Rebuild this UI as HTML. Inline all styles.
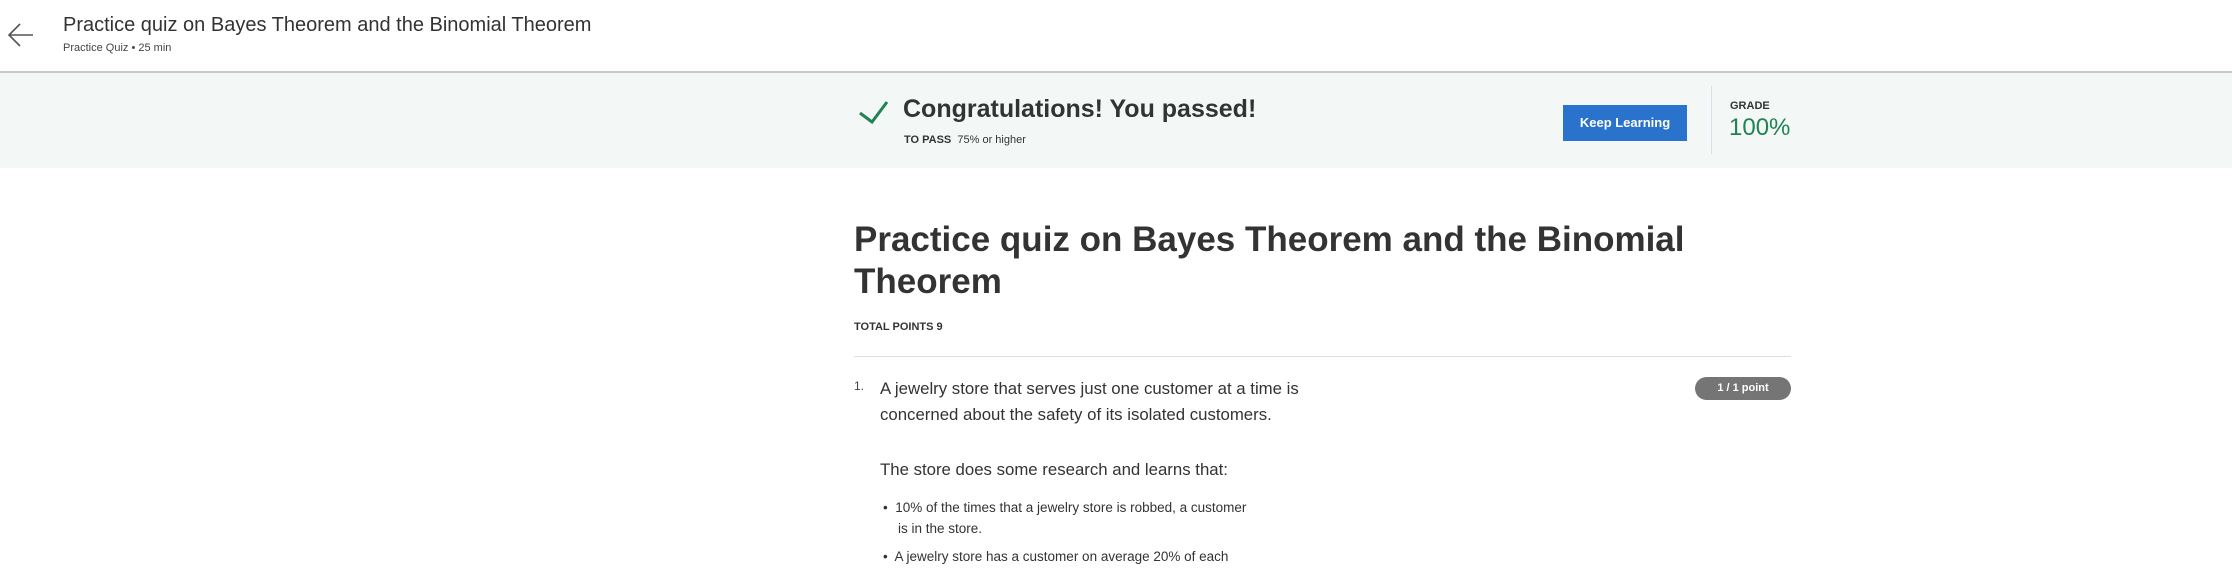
<!DOCTYPE html>
<html><head><meta charset="utf-8"><style>
*{margin:0;padding:0;box-sizing:border-box}
body{width:2232px;height:572px;overflow:hidden;background:#fff;font-family:"Liberation Sans",sans-serif;color:#373a3c;position:relative}
.a{position:absolute;white-space:nowrap}
</style></head><body>
<svg class="a" style="left:7px;top:22px" width="28" height="26" viewBox="0 0 28 26"><path d="M26 13H3M13 2L2 13l11 11" fill="none" stroke="#555" stroke-width="1.6"/></svg>
<div class="a" style="left:63px;top:14px;font-size:20px;color:#333">Practice quiz on Bayes Theorem and the Binomial Theorem</div>
<div class="a" style="left:63px;top:42px;font-size:11px;color:#444">Practice Quiz • 25 min</div>
<div class="a" style="left:0;top:71px;width:2232px;height:2px;background:#c8c8c8"></div>
<div class="a" style="left:0;top:73px;width:2232px;height:95px;background:#f3f8f6"></div>
<svg class="a" style="left:856px;top:99px" width="34" height="26"><path d="M4 14l12 9L31 3" fill="none" stroke="#1f8354" stroke-width="3"/></svg>
<div class="a" style="left:903px;top:95px;font-size:25px;font-weight:bold;color:#333">Congratulations! You passed!</div>
<div class="a" style="left:904px;top:134px;font-size:11px;color:#333"><b>TO PASS</b>&nbsp; 75% or higher</div>
<div class="a" style="left:1563px;top:105px;width:124px;height:36px;background:#2a73cc;color:#fff;font-size:13px;font-weight:bold;text-align:center;line-height:36px">Keep Learning</div>
<div class="a" style="left:1711px;top:86px;width:1px;height:68px;background:#dde"></div>
<div class="a" style="left:1730px;top:100px;font-size:11px;font-weight:bold;color:#333">GRADE</div>
<div class="a" style="left:1729px;top:114px;font-size:24px;color:#1f8354">100%</div>
<div class="a" style="left:854px;top:219px;font-size:35px;font-weight:bold;line-height:42px;color:#333;white-space:normal;width:900px">Practice quiz on Bayes Theorem and the Binomial Theorem</div>
<div class="a" style="left:854px;top:321px;font-size:11px;font-weight:bold;color:#333">TOTAL POINTS 9</div>
<div class="a" style="left:854px;top:356px;width:937px;height:1px;background:#ddd"></div>
<div class="a" style="left:854px;top:379px;font-size:12px;color:#444">1.</div>
<div class="a" style="left:880px;top:376px;font-size:16.8px;line-height:26px;color:#333">A jewelry store that serves just one customer at a time is<br>concerned about the safety of its isolated customers.</div>
<div class="a" style="left:1695px;top:377px;width:96px;height:23px;border-radius:12px;background:#757575;color:#fff;font-size:11px;font-weight:bold;text-align:center;line-height:23px">1 / 1 point</div>
<div class="a" style="left:880px;top:460px;font-size:16.8px;color:#333">The store does some research and learns that:</div>
<div class="a" style="left:883px;top:497px;font-size:13.5px;line-height:21px;color:#333">•&nbsp; 10% of the times that a jewelry store is robbed, a customer<br>&nbsp;&nbsp;&nbsp; is in the store.</div>
<div class="a" style="left:883px;top:549px;font-size:13.5px;color:#333">•&nbsp; A jewelry store has a customer on average 20% of each</div>
</body></html>
